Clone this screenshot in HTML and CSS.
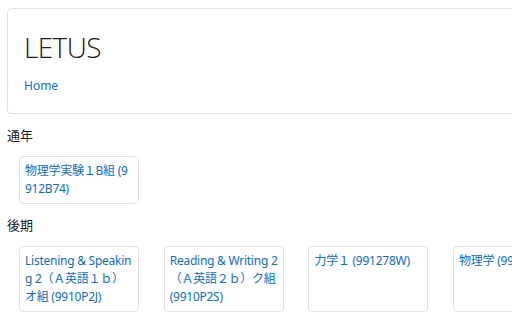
FILE: index.html
```html
<!DOCTYPE html>
<html lang="ja">
<head>
<meta charset="utf-8">
<title>LETUS</title>
<link rel="stylesheet" href="styles.css">
</head>
<body>
<div class="page">
  <header class="page-header">
    <h1 class="site-title">LETUS</h1>
    <nav class="breadcrumb"><a href="#">Home</a></nav>
  </header>

  <section class="term">
    <h2 class="term-title">通年</h2>
    <ul class="course-list">
      <li class="course-card"><a href="#">物理学実験１B組 (9912B74)</a></li>
    </ul>
  </section>

  <section class="term">
    <h2 class="term-title">後期</h2>
    <ul class="course-list">
      <li class="course-card"><a href="#">Listening &amp; Speaking 2（Ａ英語１ｂ）オ組 (9910P2J)</a></li>
      <li class="course-card"><a href="#">Reading &amp; Writing 2（Ａ英語２ｂ）ク組 (9910P2S)</a></li>
      <li class="course-card"><a href="#">力学１ (991278W)</a></li>
      <li class="course-card"><a href="#">物理学 (991279W)</a></li>
    </ul>
  </section>
</div>
</body>
</html>
```
FILE: styles.css
```css
html, body {
  margin: 0;
  padding: 0;
  overflow: hidden;
  background: #fff;
}
body {
  font-family: "Noto Sans", "Noto Sans CJK JP", sans-serif;
  color: #1d2125;
  font-size: 12px;
}
.page {
  width: 640px;
  padding: 8px 0 0 7px;
}
.page-header {
  border: 1px solid #dee2e6;
  border-radius: 4px;
  padding: 20px 16px 18px;
}
.site-title {
  margin: 0;
  font-family: "Open Sans", "Noto Sans", sans-serif;
  font-weight: 300;
  font-size: 28px;
  line-height: 36px;
  color: #1d2125;
  letter-spacing: -0.6px;
}
.breadcrumb {
  margin-top: 12px;
  font-size: 12px;
  line-height: 18px;
}
a {
  color: #0f6cbf;
  text-decoration: none;
}
.term-title {
  margin: 12px 0 0;
  font-size: 13px;
  font-weight: 400;
  line-height: 18px;
  font-family: "Noto Sans CJK JP", sans-serif;
}
.course-list {
  list-style: none;
  margin: 12px 0 0 12px;
  padding: 0;
  display: flex;
  gap: 24.7px;
}
.course-card {
  flex: 0 0 auto;
  box-sizing: border-box;
  width: 120px;
  padding: 5px 4px 5px 5px;
  border: 1px solid #dee2e6;
  border-radius: 4px;
  line-height: 18px;
  word-break: break-all;
  letter-spacing: -0.25px;
}
```
